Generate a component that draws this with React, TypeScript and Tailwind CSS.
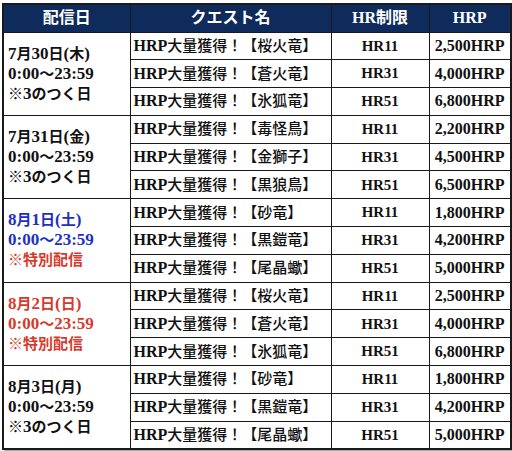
const serif = "font-['Liberation_Serif','Noto_Sans_CJK_JP',serif]";

type Quest = { name: string; hr: string; hrp: string };
type Group = {
  date: string;
  time: string;
  note: string;
  dateColor: string;
  noteColor: string;
  quests: Quest[];
};

const groups: Group[] = [
  {
    date: "7月30日(木)",
    time: "0:00～23:59",
    note: "※3のつく日",
    dateColor: "text-[#111]",
    noteColor: "text-[#111]",
    quests: [
      { name: "桜火竜", hr: "HR11", hrp: "2,500HRP" },
      { name: "蒼火竜", hr: "HR31", hrp: "4,000HRP" },
      { name: "氷狐竜", hr: "HR51", hrp: "6,800HRP" },
    ],
  },
  {
    date: "7月31日(金)",
    time: "0:00～23:59",
    note: "※3のつく日",
    dateColor: "text-[#111]",
    noteColor: "text-[#111]",
    quests: [
      { name: "毒怪鳥", hr: "HR11", hrp: "2,200HRP" },
      { name: "金獅子", hr: "HR31", hrp: "4,500HRP" },
      { name: "黒狼鳥", hr: "HR51", hrp: "6,500HRP" },
    ],
  },
  {
    date: "8月1日(土)",
    time: "0:00～23:59",
    note: "※特別配信",
    dateColor: "text-[#2030c0]",
    noteColor: "text-[#d63a2c]",
    quests: [
      { name: "砂竜", hr: "HR11", hrp: "1,800HRP" },
      { name: "黒鎧竜", hr: "HR31", hrp: "4,200HRP" },
      { name: "尾晶蠍", hr: "HR51", hrp: "5,000HRP" },
    ],
  },
  {
    date: "8月2日(日)",
    time: "0:00～23:59",
    note: "※特別配信",
    dateColor: "text-[#d63a2c]",
    noteColor: "text-[#d63a2c]",
    quests: [
      { name: "桜火竜", hr: "HR11", hrp: "2,500HRP" },
      { name: "蒼火竜", hr: "HR31", hrp: "4,000HRP" },
      { name: "氷狐竜", hr: "HR51", hrp: "6,800HRP" },
    ],
  },
  {
    date: "8月3日(月)",
    time: "0:00～23:59",
    note: "※3のつく日",
    dateColor: "text-[#111]",
    noteColor: "text-[#111]",
    quests: [
      { name: "砂竜", hr: "HR11", hrp: "1,800HRP" },
      { name: "黒鎧竜", hr: "HR31", hrp: "4,200HRP" },
      { name: "尾晶蠍", hr: "HR51", hrp: "5,000HRP" },
    ],
  },
];

// latin runs in bold serif at a slightly larger size, CJK runs a touch lighter
function Mixed({ text, latin, cjk }: { text: string; latin: string; cjk: string }) {
  const parts = text.match(/[\x00-\x7F]+|[^\x00-\x7F]+/g) ?? [];
  return (
    <>
      {parts.map((p, i) =>
        /^[\x00-\x7F]/.test(p) ? (
          <span key={i} className={latin}>
            {p}
          </span>
        ) : (
          <span key={i} className={cjk}>
            {p}
          </span>
        )
      )}
    </>
  );
}

const latin16 = "text-[16px] font-bold";
const latin17 = "text-[17px] font-bold";
const cjk15 = "text-[15px] font-medium";

export default function App() {
  return (
    <div className={`min-h-[451px] w-[512px] bg-white pl-[2px] pt-[3px] ${serif}`}>
      <table className="w-[508px] table-fixed border-collapse border-2 border-[#1a1a1a] shadow-[2px_2px_2px_rgba(0,0,0,0.35)]">
        <colgroup>
          <col className="w-[127px]" />
          <col className="w-[201px]" />
          <col className="w-[98px]" />
          <col className="w-[82px]" />
        </colgroup>
        <thead>
          <tr className="h-[28px] bg-[#0f2b5c] text-[16px] font-bold text-white">
            <th className="border border-[#1a1a1a] text-center">配信日</th>
            <th className="border border-[#1a1a1a] text-center">クエスト名</th>
            <th className="border border-[#1a1a1a] text-center">HR制限</th>
            <th className="border border-[#1a1a1a] text-center">HRP</th>
          </tr>
        </thead>
        <tbody>
          {groups.map((g) =>
            g.quests.map((q, i) => (
              <tr key={g.date + i} className="h-[27.8px] text-[#111]">
                {i === 0 ? (
                  <td rowSpan={3} className="border border-[#1a1a1a] pl-[4px] align-middle leading-[20px]">
                    <div className={g.dateColor}>
                      <Mixed text={g.date} latin={latin17} cjk="text-[15px] font-bold" />
                    </div>
                    <div className={g.dateColor}>
                      <Mixed text={g.time} latin={latin17} cjk="text-[15px] font-bold" />
                    </div>
                    <div className={g.noteColor}>
                      <Mixed text={g.note} latin={latin17} cjk="text-[15px] font-bold" />
                    </div>
                  </td>
                ) : null}
                <td className="whitespace-nowrap border border-[#1a1a1a] pl-[3px]">
                  <Mixed text={`HRP大量獲得！【${q.name}】`} latin={latin16} cjk={cjk15} />
                </td>
                <td className="border border-[#1a1a1a] text-center text-[15px] font-bold">{q.hr}</td>
                <td className="border border-[#1a1a1a] text-center text-[16px] font-bold">{q.hrp}</td>
              </tr>
            ))
          )}
        </tbody>
      </table>
    </div>
  );
}
